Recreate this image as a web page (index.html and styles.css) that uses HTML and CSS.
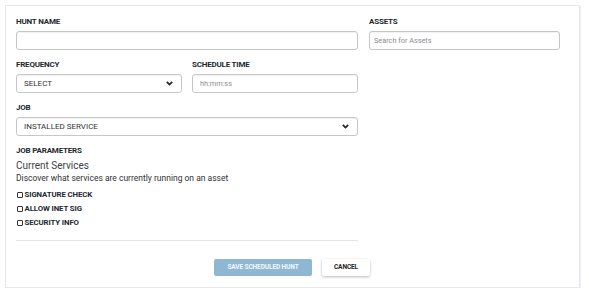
FILE: index.html
```html
<!DOCTYPE html>
<html>
<head>
<meta charset="utf-8">
<link rel="stylesheet" href="styles.css">
</head>
<body>
<div class="card">
  <div class="grid">
    <div class="left">
      <div class="field">
        <div class="label">HUNT NAME</div>
        <div class="input"></div>
      </div>
      <div class="row">
        <div class="field half">
          <div class="label">FREQUENCY</div>
          <div class="input select"><span class="value">SELECT</span>
            <svg class="chev" width="7" height="5" viewBox="0 0 7 5"><polyline points="0.8,0.8 3.5,3.6 6.2,0.8" fill="none" stroke="#222" stroke-width="1.7"/></svg>
          </div>
        </div>
        <div class="field half">
          <div class="label">SCHEDULE TIME</div>
          <div class="input"><span class="ph">hh:mm:ss</span></div>
        </div>
      </div>
      <div class="field">
        <div class="label">JOB</div>
        <div class="input select"><span class="value">INSTALLED SERVICE</span>
          <svg class="chev" width="7" height="5" viewBox="0 0 7 5"><polyline points="0.8,0.8 3.5,3.6 6.2,0.8" fill="none" stroke="#222" stroke-width="1.7"/></svg>
        </div>
      </div>
      <div class="params">
        <div class="label">JOB PARAMETERS</div>
        <div class="title">Current Services</div>
        <div class="desc">Discover what services are currently running on an asset</div>
        <div class="checks">
          <div class="check"><span class="box"></span>SIGNATURE CHECK</div>
          <div class="check"><span class="box"></span>ALLOW INET SIG</div>
          <div class="check"><span class="box"></span>SECURITY INFO</div>
        </div>
      </div>
      <div class="divider"></div>
    </div>
    <div class="right">
      <div class="field">
        <div class="label">ASSETS</div>
        <div class="input assets"><span class="ph">Search for Assets</span></div>
      </div>
    </div>
  </div>
  <div class="actions">
    <button class="btn save">SAVE SCHEDULED HUNT</button>
    <button class="btn cancel">CANCEL</button>
  </div>
</div>
</body>
</html>
```

FILE: styles.css
```css
* { box-sizing: border-box; }
html, body { margin: 0; padding: 0; background: #ffffff; }
body { font-family: Roboto, "Liberation Sans", sans-serif; color: #222; }

.card {
  margin: 5px 0 0 5px;
  width: 575px;
  height: 283px;
  border: 1px solid #e4e8ec;
  box-shadow: 1px 1px 0 #edf0f3;
  background: #fff;
  padding: 10.5px 10px 0 10px;
}

.grid {
  display: grid;
  grid-template-columns: 342px 191px;
  column-gap: 11px;
}

.field { margin-bottom: 10px; }
.row { display: flex; gap: 10px; }
.half { width: 166px; }

.label {
  font-size: 8px;
  font-weight: 700;
  line-height: 10px;
  height: 10px;
  color: #1e2830;
  letter-spacing: -0.2px;
  margin-bottom: 4.5px;
}

.input {
  height: 18.5px;
  border: 1px solid #c4c7ca;
  border-radius: 3px;
  box-shadow: inset 0 1px 1px rgba(0,0,0,0.06);
  display: flex;
  align-items: center;
  padding: 0 7px;
  font-size: 8px;
}
.select { justify-content: space-between; padding-right: 8px; }
.value { color: #333; }
.ph { color: #8a8d90; font-size: 7.3px; }
.assets { padding-left: 4px; }
.chev { display: block; }

.params { margin-top: 0; }
.params .label { margin-bottom: 0; }
.title {
  font-size: 10px;
  line-height: 13px;
  color: #3b3f44;
  margin-top: 3px;
}
.desc {
  font-size: 8.5px;
  line-height: 10px;
  color: #333;
  margin-top: 1px;
}
.checks { margin-top: 5px; }
.check {
  display: flex;
  align-items: center;
  height: 14px;
  font-size: 7.8px;
  font-weight: 700;
  color: #1e2830;
  letter-spacing: -0.1px;
}
.box {
  width: 6px;
  height: 6px;
  border: 1px solid #333;
  border-radius: 1px;
  margin-right: 2px;
  margin-left: 0.5px;
}

.divider {
  height: 1px;
  background: #e4e6e8;
  margin-top: 10px;
}

.actions {
  display: flex;
  justify-content: center;
  gap: 10px;
  margin-top: 18px;
  padding-right: 1px;
}
.btn {
  height: 17px;
  border: none;
  border-radius: 2px;
  font-family: Roboto, "Liberation Sans", sans-serif;
  font-size: 6.5px;
  font-weight: 700;
  padding: 0;
  letter-spacing: -0.1px;
}
.save {
  width: 98px;
  background: #8fb7d3;
  color: #f4f8fb;
}
.cancel {
  width: 48px;
  background: #fff;
  color: #222;
  box-shadow: 0 1px 3px rgba(0,0,0,0.28);
}
```
